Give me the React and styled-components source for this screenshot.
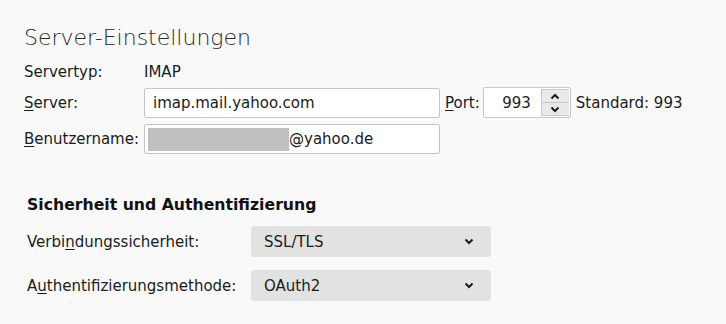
import styled, { createGlobalStyle } from "styled-components";

const GlobalStyle = createGlobalStyle`
  html, body {
    margin: 0;
    padding: 0;
    background: #f9f9f9;
  }
  body {
    font-family: "DejaVu Sans", "Noto Sans", sans-serif;
    font-size: 15px;
    color: #1b1b1b;
  }
`;

const Page = styled.div`
  padding: 25px 0 0 24px;
  width: 726px;
  height: 324px;
  box-sizing: border-box;
`;

const Title = styled.h1`
  margin: 0;
  font-size: 22px;
  font-weight: 200;
  line-height: 25px;
  color: #2a2a2a;
`;

const ServerGrid = styled.div`
  margin-top: 13px;
  display: grid;
  grid-template-columns: 120px auto;
  row-gap: 6px;
  align-items: center;
`;

const Label = styled.span`
  line-height: 18px;
`;

const Key = styled.span`
  text-decoration: underline;
  text-underline-offset: 2px;
`;

const Line = styled.div`
  display: flex;
  align-items: center;
`;

const TextBox = styled.div`
  width: 296px;
  height: 30px;
  box-sizing: border-box;
  background: #fff;
  border: 1px solid #c6c6c6;
  border-radius: 2px;
  display: flex;
  align-items: center;
  padding-left: ${(p) => (p.$masked ? 3 : 8)}px;
`;

const Mask = styled.span`
  display: inline-block;
  width: 141px;
  height: 23px;
  background: #c0c0c0;
`;

const PortLabel = styled.span`
  margin: 0 3px 0 5px;
`;

const SpinBox = styled.div`
  width: 88px;
  height: 31px;
  box-sizing: border-box;
  background: #fff;
  border: 1px solid #c6c6c6;
  border-radius: 2px;
  display: flex;
  align-items: stretch;
`;

const SpinValue = styled.span`
  flex: 1;
  display: flex;
  align-items: center;
  justify-content: flex-end;
  padding-right: 10px;
`;

const SpinButtons = styled.div`
  width: 27px;
  margin: 1px 1px 1px 0;
  display: flex;
  flex-direction: column;
  gap: 1px;
  background: #c8c8c8;
  border: 1px solid #c8c8c8;
  border-right: none;
`;

const SpinButton = styled.div`
  flex: 1;
  background: #e9e9e9;
  display: flex;
  align-items: center;
  justify-content: center;
`;

const Standard = styled.span`
  margin-left: 5px;
`;

const Section = styled.div`
  margin: 42px 0 0 3px;
`;

const SectionTitle = styled.h2`
  margin: 0;
  font-size: 15.7px;
  font-weight: bold;
  line-height: 18px;
  color: #111;
`;

const SelectGrid = styled.div`
  margin-top: 12px;
  display: grid;
  grid-template-columns: 224px 240px;
  row-gap: 13px;
  align-items: center;
`;

const Select = styled.div`
  height: 31px;
  background: #e2e2e2;
  border-radius: 3px;
  display: flex;
  align-items: center;
  justify-content: space-between;
  padding: 0 17px 0 13px;
`;

const Chevron = ({ up }) => (
  <svg width="10" height="7" viewBox="0 0 10 7">
    <polyline
      points={up ? "1.5,5.5 5,2 8.5,5.5" : "1.5,1.5 5,5 8.5,1.5"}
      fill="none"
      stroke="#1b1b1b"
      strokeWidth="2"
    />
  </svg>
);

export default function App() {
  return (
    <Page>
      <GlobalStyle />
      <Title>Server-Einstellungen</Title>
      <ServerGrid>
        <Label>Servertyp:</Label>
        <Label>IMAP</Label>
        <Label>
          <Key>S</Key>erver:
        </Label>
        <Line>
          <TextBox>imap.mail.yahoo.com</TextBox>
          <PortLabel>
            <Key>P</Key>ort:
          </PortLabel>
          <SpinBox>
            <SpinValue>993</SpinValue>
            <SpinButtons>
              <SpinButton>
                <Chevron up />
              </SpinButton>
              <SpinButton>
                <Chevron />
              </SpinButton>
            </SpinButtons>
          </SpinBox>
          <Standard>Standard: 993</Standard>
        </Line>
        <Label>
          <Key>B</Key>enutzername:
        </Label>
        <Line>
          <TextBox $masked>
            <Mask />
            @yahoo.de
          </TextBox>
        </Line>
      </ServerGrid>
      <Section>
        <SectionTitle>Sicherheit und Authentifizierung</SectionTitle>
        <SelectGrid>
          <Label>
            Verbi<Key>n</Key>dungssicherheit:
          </Label>
          <Select>
            SSL/TLS
            <Chevron />
          </Select>
          <Label>
            A<Key>u</Key>thentifizierungsmethode:
          </Label>
          <Select>
            OAuth2
            <Chevron />
          </Select>
        </SelectGrid>
      </Section>
    </Page>
  );
}
